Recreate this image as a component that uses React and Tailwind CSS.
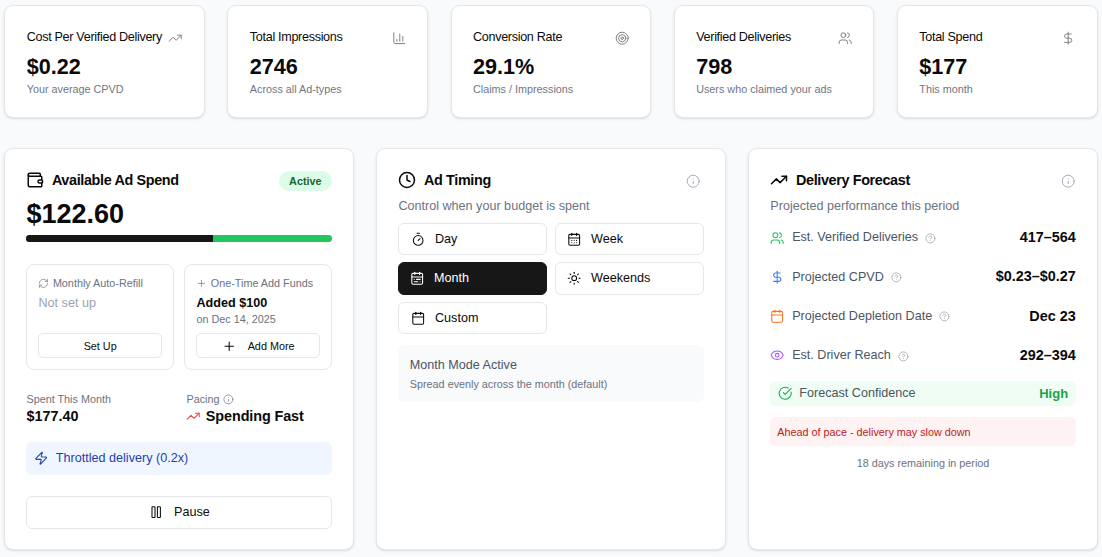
import React from "react";
import { TrendingUp, ChartColumn, Target, Users, DollarSign, Wallet, RefreshCw, Plus, Clock, Timer, CalendarDays, Sun, Calendar, CalendarRange, Info, CircleHelp, Eye, CircleCheckBig, Zap, Pause } from "lucide-react";

const stats = [
  { t: "Cost Per Verified Delivery", v: "$0.22", s: "Your average CPVD", I: TrendingUp },
  { t: "Total Impressions", v: "2746", s: "Across all Ad-types", I: ChartColumn },
  { t: "Conversion Rate", v: "29.1%", s: "Claims / Impressions", I: Target },
  { t: "Verified Deliveries", v: "798", s: "Users who claimed your ads", I: Users },
  { t: "Total Spend", v: "$177", s: "This month", I: DollarSign },
];

function StatCard({ t, v, s, I }) {
  return (
    <div className="h-[113px] rounded-[9px] border border-[#e5e7eb] bg-white pl-[21.5px] pr-[21px] pt-[22px] shadow-sm">
      <div className="flex h-[18px] items-center justify-between">
        <span className="whitespace-nowrap text-[12.6px] leading-[18px] tracking-[-0.315px] text-[#0a0a0a]">{t}</span>
        <I className="mt-[2px] h-[14.4px] w-[14.4px] shrink-0 text-[#737373]" strokeWidth={1.5} />
      </div>
      <div className="mt-[7px] text-[21.6px] font-bold leading-[28px] text-[#0a0a0a]">{v}</div>
      <div className="mt-[0.3px] text-[10.8px] leading-[16px] text-[#6f7682]">{s}</div>
    </div>
  );
}

function ModeButton({ I, label, active, tall, inset }) {
  return (
    <button className={"flex items-center rounded-[6px] border text-[12.6px] " + (tall ? "h-[32.7px] " : "h-[31.4px] ") + (inset ? "pl-[11.2px] " : "pl-[10.2px] ") + (active ? "border-[#171717] bg-[#171717] text-white" : "border-[#e5e7eb] bg-white text-[#0a0a0a]")}>
      <I className="h-[14.4px] w-[14.4px]" strokeWidth={1.75} />
      <span className="ml-[10px]">{label}</span>
    </button>
  );
}

function ForecastRow({ I, color, label, value }) {
  return (
    <div className="flex h-[20px] items-center justify-between">
      <div className="flex items-center">
        <I className={"h-[14.4px] w-[14.4px] " + color} strokeWidth={1.75} />
        <span className="ml-[7.4px] text-[12.6px] text-[#4b5563]">{label}</span>
        <CircleHelp className="ml-[7px] mt-[1px] h-[10.8px] w-[10.8px] text-[#9ca3af]" strokeWidth={1.75} />
      </div>
      <span className="text-[14.4px] font-bold text-[#0a0a0a]">{value}</span>
    </div>
  );
}

export default function App() {
  return (
    <div className="h-[557px] overflow-hidden bg-[#f9fafb] pl-[4.2px] pr-[4.5px] pt-[5px] font-['Liberation_Sans',Arial,sans-serif]">
      <div className="grid grid-cols-5 gap-[22.5px]">
        {stats.map((c) => <StatCard key={c.t} {...c} />)}
      </div>
      <div className="mt-[30.4px] grid grid-cols-3 gap-[22.5px]">
        <div className="h-[401.6px] rounded-[9px] border border-[#e5e7eb] bg-white pl-[21.3px] pr-[20.8px] pt-[21.6px] shadow-sm">
          <div className="flex h-[20px] items-center justify-between">
            <div className="-mt-[1px] flex items-center">
              <Wallet className="h-[18px] w-[18px] text-[#0a0a0a]" strokeWidth={2} />
              <span className="ml-[7.4px] text-[14.4px] font-bold tracking-[-0.36px] text-[#0a0a0a]">Available Ad Spend</span>
            </div>
            <span className="flex h-[20px] w-[53px] items-center justify-center rounded-full bg-[#dcfce7] text-[10.8px] font-bold text-[#166534]">Active</span>
          </div>
          <div className="mt-[5px] text-[27px] font-bold leading-[36px] text-[#0a0a0a]">$122.60</div>
          <div className="mt-[3px] flex h-[7px] overflow-hidden rounded-full bg-[#22c55e]">
            <div className="h-full w-[61%] bg-[#171717]" />
          </div>
          <div className="mt-[22.3px] grid grid-cols-2 gap-[10.6px]">
            <div className="h-[105.4px] rounded-[8px] border border-[#e5e7eb] px-[11px] pt-[9.7px]">
              <div className="flex h-[16px] items-center text-[10.8px] text-[#6b7280]">
                <RefreshCw className="h-[10.8px] w-[10.8px]" strokeWidth={1.5} />
                <span className="ml-[3.6px]">Monthly Auto-Refill</span>
              </div>
              <div className="mt-[2.7px] text-[12.6px] leading-[18px] text-[#9ca3af]">Not set up</div>
              <button className="mt-[21.6px] h-[25px] w-full rounded-[5px] border border-[#e5e7eb] text-[10.8px] text-[#0a0a0a]">Set Up</button>
            </div>
            <div className="h-[105.4px] rounded-[8px] border border-[#e5e7eb] px-[11px] pt-[9.7px]">
              <div className="flex h-[16px] items-center text-[10.8px] text-[#6b7280]">
                <Plus className="h-[10.8px] w-[10.8px]" strokeWidth={1.5} />
                <span className="ml-[3.6px]">One-Time Add Funds</span>
              </div>
              <div className="mt-[2.7px] text-[12.6px] font-bold leading-[18px] text-[#0a0a0a]">Added $100</div>
              <div className="text-[10.8px] leading-[15px] text-[#6b7280]">on Dec 14, 2025</div>
              <button className="mt-[6.8px] flex h-[25px] w-full items-center justify-center rounded-[5px] border border-[#e5e7eb] text-[10.8px] text-[#0a0a0a]">
                <Plus className="h-[14.4px] w-[14.4px]" strokeWidth={1.75} />
                <span className="ml-[11.5px]">Add More</span>
              </button>
            </div>
          </div>
          <div className="mt-[21.6px] grid grid-cols-2 gap-[10.6px]">
            <div>
              <div className="text-[10.8px] leading-[16px] text-[#6b7280]">Spent This Month</div>
              <div className="text-[14.4px] font-bold leading-[18px] text-[#0a0a0a]">$177.40</div>
            </div>
            <div className="ml-[2px]">
              <div className="flex items-center text-[10.8px] leading-[16px] text-[#6b7280]">Pacing<Info className="ml-[3.6px] h-[10.8px] w-[10.8px]" strokeWidth={1.5} /></div>
              <div className="flex items-center text-[14.4px] font-bold leading-[18px] tracking-[-0.1px] text-[#0a0a0a]">
                <TrendingUp className="h-[14.4px] w-[14.4px] text-[#ef4444]" strokeWidth={1.75} />
                <span className="ml-[5px] whitespace-nowrap">Spending Fast</span>
              </div>
            </div>
          </div>
          <div className="mt-[16.7px] flex h-[32.7px] items-center rounded-[6px] bg-[#eff6ff] pl-[7.4px] text-[#1e40af]">
            <Zap className="h-[14.4px] w-[14.4px]" strokeWidth={1.75} />
            <span className="ml-[7.6px] text-[12.6px]">Throttled delivery (0.2x)</span>
          </div>
          <button className="mt-[21.6px] flex h-[32.4px] w-full items-center justify-center rounded-[6px] border border-[#e5e7eb] text-[12.6px] text-[#0a0a0a]">
            <Pause className="h-[14.4px] w-[14.4px]" strokeWidth={1.75} />
            <span className="ml-[11px]">Pause</span>
          </button>
        </div>

        <div className="h-[401.6px] rounded-[9px] border border-[#e5e7eb] bg-white pl-[21.3px] pr-[20.8px] pt-[21.6px] shadow-sm">
          <div className="flex h-[20px] items-center justify-between">
            <div className="-mt-[1px] flex items-center">
              <Clock className="h-[18px] w-[18px] text-[#0a0a0a]" strokeWidth={2} />
              <span className="ml-[7.6px] text-[14.4px] font-bold tracking-[-0.36px] text-[#0a0a0a]">Ad Timing</span>
            </div>
            <Info className="mr-[3.6px] h-[14.4px] w-[14.4px] text-[#9ca3af]" strokeWidth={1.5} />
          </div>
          <div className="mt-[5.3px] text-[12.6px] leading-[20px] text-[#6b7280]">Control when your budget is spent</div>
          <div className="mt-[7px] grid grid-cols-2 items-start gap-x-[8.6px] gap-y-[7.5px]">
            <ModeButton I={Timer} label="Day" inset />
            <ModeButton I={CalendarDays} label="Week" />
            <ModeButton I={CalendarRange} label="Month" active tall />
            <ModeButton I={Sun} label="Weekends" tall />
            <ModeButton I={Calendar} label="Custom" inset />
          </div>
          <div className="mt-[11.3px] h-[56.7px] rounded-[6px] bg-[#f9fafb] px-[11.4px] pt-[11px]">
            <div className="text-[12.6px] leading-[18px] text-[#4b5563]">Month Mode Active</div>
            <div className="mt-[3px] text-[10.8px] leading-[15px] text-[#6b7280]">Spread evenly across the month (default)</div>
          </div>
        </div>

        <div className="h-[401.6px] rounded-[9px] border border-[#e5e7eb] bg-white pl-[21.3px] pr-[20.8px] pt-[21.6px] shadow-sm">
          <div className="flex h-[20px] items-center justify-between">
            <div className="-mt-[1px] flex items-center">
              <TrendingUp className="h-[18px] w-[18px] text-[#0a0a0a]" strokeWidth={2} />
              <span className="ml-[7.6px] text-[14.4px] font-bold tracking-[-0.36px] text-[#0a0a0a]">Delivery Forecast</span>
            </div>
            <Info className="h-[14.4px] w-[14.4px] text-[#9ca3af]" strokeWidth={1.5} />
          </div>
          <div className="mt-[5.3px] text-[12.6px] leading-[20px] text-[#6b7280]">Projected performance this period</div>
          <div className="mt-[11.5px] flex flex-col gap-[19.3px]">
            <ForecastRow I={Users} color="text-[#22c55e]" label="Est. Verified Deliveries" value="417–564" />
            <ForecastRow I={DollarSign} color="text-[#3b82f6]" label="Projected CPVD" value="$0.23–$0.27" />
            <ForecastRow I={Calendar} color="text-[#f97316]" label="Projected Depletion Date" value="Dec 23" />
            <ForecastRow I={Eye} color="text-[#a855f7]" label="Est. Driver Reach" value="292–394" />
          </div>
          <div className="mt-[15.5px] flex h-[25px] items-center justify-between rounded-[6px] bg-[#f0fdf4] px-[7.6px]">
            <div className="flex items-center">
              <CircleCheckBig className="h-[14.4px] w-[14.4px] text-[#16a34a]" strokeWidth={1.75} />
              <span className="ml-[7px] text-[12.6px] text-[#4b5563]">Forecast Confidence</span>
            </div>
            <span className="text-[13px] font-bold text-[#16a34a]">High</span>
          </div>
          <div className="mt-[11px] flex h-[29px] items-center rounded-[6px] bg-[#fef2f2] px-[7px] text-[10.8px] text-[#b91c1c]">Ahead of pace - delivery may slow down</div>
          <div className="mt-[10px] text-center text-[10.8px] leading-[15px] text-[#6b7280]">18 days remaining in period</div>
        </div>
      </div>
    </div>
  );
}
